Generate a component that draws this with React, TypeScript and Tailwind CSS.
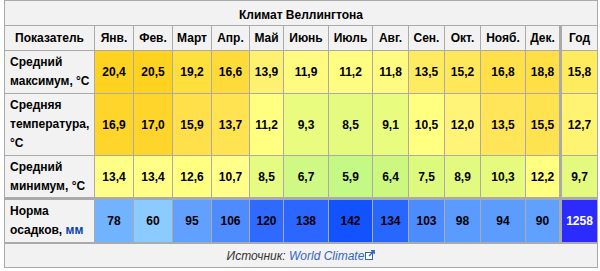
import React from 'react';

const months = ['Янв.', 'Фев.', 'Март', 'Апр.', 'Май', 'Июнь', 'Июль', 'Авг.', 'Сен.', 'Окт.', 'Нояб.', 'Дек.'];

type Cell = { v: string; bg: string; light?: boolean };

const rows: { label: React.ReactNode; cells: Cell[]; year: Cell }[] = [
  {
    label: (<>Средний<br />максимум, °C</>),
    cells: [
      { v: '20,4', bg: 'bg-[#ffd21f]' },
      { v: '20,5', bg: 'bg-[#ffd21f]' },
      { v: '19,2', bg: 'bg-[#ffdf3c]' },
      { v: '16,6', bg: 'bg-[#ffdb3a]' },
      { v: '13,9', bg: 'bg-[#fff170]' },
      { v: '11,9', bg: 'bg-[#fffa80]' },
      { v: '11,2', bg: 'bg-[#fffc82]' },
      { v: '11,8', bg: 'bg-[#fffa80]' },
      { v: '13,5', bg: 'bg-[#ffeb60]' },
      { v: '15,2', bg: 'bg-[#ffe75a]' },
      { v: '16,8', bg: 'bg-[#ffe048]' },
      { v: '18,8', bg: 'bg-[#ffdf45]' },
    ],
    year: { v: '15,8', bg: 'bg-[#ffeb5e]' },
  },
  {
    label: (<>Средняя<br />температура,<br />°C</>),
    cells: [
      { v: '16,9', bg: 'bg-[#ffd52c]' },
      { v: '17,0', bg: 'bg-[#ffd52c]' },
      { v: '15,9', bg: 'bg-[#ffe04a]' },
      { v: '13,7', bg: 'bg-[#ffe350]' },
      { v: '11,2', bg: 'bg-[#ffff80]' },
      { v: '9,3', bg: 'bg-[#eafc80]' },
      { v: '8,5', bg: 'bg-[#e5fb80]' },
      { v: '9,1', bg: 'bg-[#e8fc80]' },
      { v: '10,5', bg: 'bg-[#ffff80]' },
      { v: '12,0', bg: 'bg-[#fff478]' },
      { v: '13,5', bg: 'bg-[#ffe557]' },
      { v: '15,5', bg: 'bg-[#ffe24f]' },
    ],
    year: { v: '12,7', bg: 'bg-[#fff372]' },
  },
  {
    label: (<>Средний<br />минимум, °C</>),
    cells: [
      { v: '13,4', bg: 'bg-[#ffff88]' },
      { v: '13,4', bg: 'bg-[#ffff88]' },
      { v: '12,6', bg: 'bg-[#ffff80]' },
      { v: '10,7', bg: 'bg-[#ffff8a]' },
      { v: '8,5', bg: 'bg-[#e6fb82]' },
      { v: '6,7', bg: 'bg-[#cff884]' },
      { v: '5,9', bg: 'bg-[#c5f986]' },
      { v: '6,4', bg: 'bg-[#cdf880]' },
      { v: '7,5', bg: 'bg-[#ddf97e]' },
      { v: '8,9', bg: 'bg-[#e3fa80]' },
      { v: '10,3', bg: 'bg-[#e6fa7e]' },
      { v: '12,2', bg: 'bg-[#ffff80]' },
    ],
    year: { v: '9,7', bg: 'bg-[#e4fa7e]' },
  },
];

const rain: Cell[] = [
  { v: '78', bg: 'bg-[#72b3ff]' },
  { v: '60', bg: 'bg-[#8ccbff]' },
  { v: '95', bg: 'bg-[#61a0ff]' },
  { v: '106', bg: 'bg-[#4e8bff]' },
  { v: '120', bg: 'bg-[#2e6aff]' },
  { v: '138', bg: 'bg-[#2a66ff]' },
  { v: '142', bg: 'bg-[#1252ff]' },
  { v: '134', bg: 'bg-[#2767ff]' },
  { v: '103', bg: 'bg-[#4d8cff]' },
  { v: '98', bg: 'bg-[#5b9aff]' },
  { v: '94', bg: 'bg-[#5c9cff]' },
  { v: '90', bg: 'bg-[#60a0ff]' },
];

function ExtIcon() {
  return (
    <svg width="10" height="10" viewBox="0 0 10 10" className="inline-block ml-px align-baseline">
      <rect x="0.5" y="2.5" width="7" height="7" fill="#fff" stroke="#3366bb" />
      <path d="M4 6 L9 1 M6 0.8 H9.2 V4" stroke="#3366bb" strokeWidth="1.4" fill="none" />
    </svg>
  );
}

const th = 'bg-[#f2f2f2] flex items-center justify-center';
const num = 'flex items-center justify-center';

export default function App() {
  return (
    <div className="w-[600px] h-[271px] bg-white pl-1 font-['Liberation_Sans',Arial,sans-serif] text-[12px] font-bold text-black">
      <div className="w-[594px] p-px bg-[#aaaaaa] grid gap-px grid-cols-[89px_38px_38px_38px_37px_33px_44px_43px_35px_35px_35px_44px_33px_37px] grid-rows-[24px_24px_42px_61px_41px_44px_24px]">
        {/* caption */}
        <div className={`${th} col-span-14 pt-[3px]`}>Климат Веллингтона</div>

        {/* header */}
        <div className={th}>Показатель</div>
        {months.map((m) => (
          <div key={m} className={th}>{m}</div>
        ))}
        <div className={`${th} ml-[2px]`}>Год</div>

        {/* temperature rows */}
        {rows.map((r, i) => (
          <React.Fragment key={i}>
            <div className="bg-[#f2f2f2] flex items-center pl-[5px] leading-[19px]">
              <div>{r.label}</div>
            </div>
            {r.cells.map((c, j) => (
              <div key={j} className={`${num} ${c.bg}`}>{c.v}</div>
            ))}
            <div className={`${num} ${r.year.bg} ml-[2px]`}>{r.year.v}</div>
          </React.Fragment>
        ))}

        {/* precipitation */}
        <div className="bg-[#f2f2f2] flex items-center pl-[5px] leading-[19px] mt-[2px]">
          <div>Норма<br />осадков, <span className="text-[#0645ad]">мм</span></div>
        </div>
        {rain.map((c, j) => (
          <div key={j} className={`${num} ${c.bg} mt-[2px]`}>{c.v}</div>
        ))}
        <div className={`${num} bg-[#2b2bff] text-white ml-[2px] mt-[2px]`}>1258</div>

        {/* source */}
        <div className="col-span-14 mt-px bg-[#f2f2f2] flex items-center justify-center font-normal italic text-[#333]">
          <span>Источник: <span className="text-[#3366bb]">World Climate</span><ExtIcon /></span>
        </div>
      </div>
    </div>
  );
}
